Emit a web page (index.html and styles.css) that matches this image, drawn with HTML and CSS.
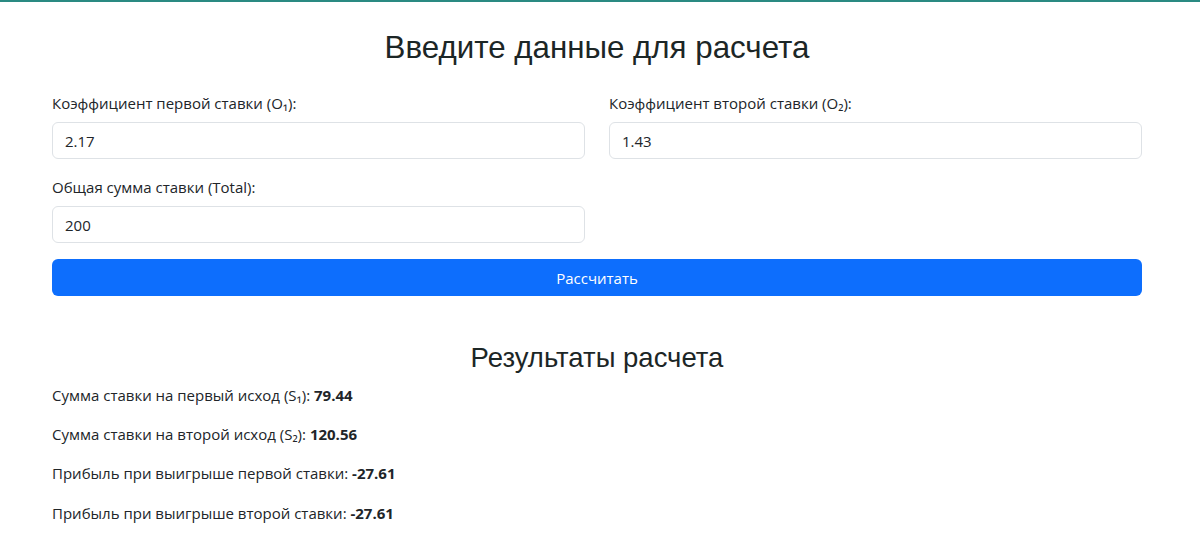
FILE: index.html
```html
<!DOCTYPE html>
<html lang="ru">
<head>
<meta charset="utf-8">
<title>Калькулятор ставок</title>
<link rel="stylesheet" href="styles.css">
</head>
<body>
<div class="topline"></div>
<main class="container">
  <h2 class="title">Введите данные для расчета</h2>
  <form class="form">
    <div class="grid">
      <div class="field">
        <label class="label" for="o1">Коэффициент первой ставки (O₁):</label>
        <input class="input" id="o1" type="text" value="2.17">
      </div>
      <div class="field">
        <label class="label" for="o2">Коэффициент второй ставки (O₂):</label>
        <input class="input" id="o2" type="text" value="1.43">
      </div>
      <div class="field">
        <label class="label" for="total">Общая сумма ставки (Total):</label>
        <input class="input" id="total" type="text" value="200">
      </div>
    </div>
    <button class="btn" type="button">Рассчитать</button>
  </form>
  <section class="results">
    <h3 class="subtitle">Результаты расчета</h3>
    <p class="line">Сумма ставки на первый исход (S₁): <b>79.44</b></p>
    <p class="line">Сумма ставки на второй исход (S₂): <b>120.56</b></p>
    <p class="line">Прибыль при выигрыше первой ставки: <b>-27.61</b></p>
    <p class="line">Прибыль при выигрыше второй ставки: <b>-27.61</b></p>
  </section>
</main>
</body>
</html>
```
FILE: styles.css
```css
* { box-sizing: border-box; }
html, body { margin: 0; padding: 0; background: #fff; }
body {
  font-family: "Open Sans", "Noto Sans", sans-serif;
  font-size: 15px;
  line-height: 24px;
  color: #212529;
}
.topline { height: 2px; background: #2a8a82; }
.container {
  width: 1090px;
  margin: 0 auto;
  padding-top: 27px;
  transform: translateX(-3px);
}
.title {
  font-family: "Liberation Sans", Arial, sans-serif;
  font-weight: 400;
  font-size: 31.3px;
  line-height: 38px;
  margin: 0 0 24px;
  text-align: center;
  color: #1c2626;
}
.grid {
  display: grid;
  grid-template-columns: 1fr 1fr;
  column-gap: 24px;
}
.field { margin-bottom: 16px; }
.label { display: block; margin-bottom: 7px; }
.input {
  display: block;
  width: 100%;
  height: 37px;
  padding: 0 12px;
  font: inherit;
  color: #212529;
  border: 1px solid #dee2e6;
  border-radius: 6px;
  background: #fff;
}
.btn {
  display: block;
  width: 100%;
  height: 37px;
  margin-top: 0;
  border: 0;
  border-radius: 6px;
  background: #0d6efd;
  color: #fff;
  font: inherit;
}
.results { margin-top: 45px; }
.subtitle {
  font-family: "Liberation Sans", Arial, sans-serif;
  font-weight: 400;
  font-size: 27.5px;
  line-height: 34px;
  margin: 0 0 8px;
  text-align: center;
  color: #1c2626;
}
.line { margin: 0 0 15.2px; }
.line b { font-weight: 700; }
```
